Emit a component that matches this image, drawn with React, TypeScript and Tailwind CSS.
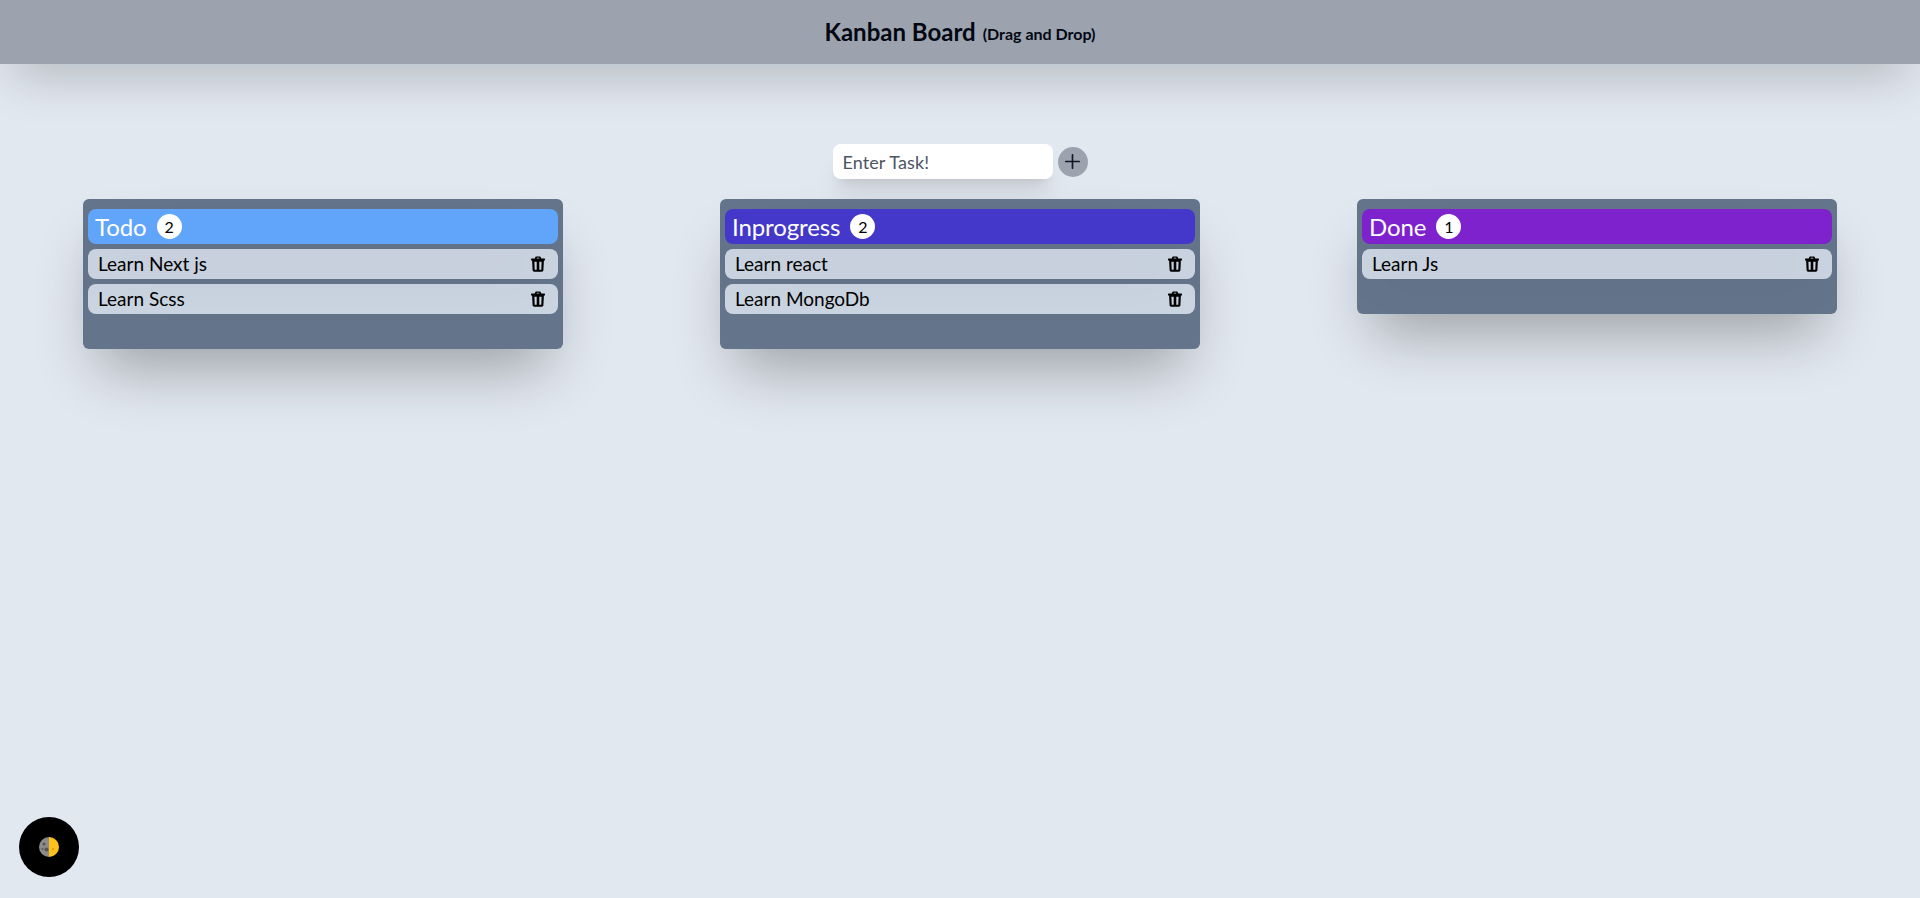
import { Plus } from "lucide-react";

const columns = [
  { title: "Todo", color: "bg-[#60a5fa]", items: ["Learn Next js", "Learn Scss"] },
  { title: "Inprogress", color: "bg-[#4338ca]", items: ["Learn react", "Learn MongoDb"] },
  { title: "Done", color: "bg-[#7e22ce]", items: ["Learn Js"] },
];

function Trash() {
  return (
    <svg viewBox="0 0 14 16" className="h-4 w-[14px] shrink-0" fill="currentColor">
      <path
        fillRule="evenodd"
        d="M4 1.700C4.200.8 4.800.4 5.600.4H8.400C9.200.4 9.800.8 10 1.700L10.200 2.400H13.400a.6.6 0 0 1 .6.6V4a.6.6 0 0 1-.6.6H12.900L12.400 14.300C12.350 15.100 11.700 15.700 10.900 15.700H3.100C2.300 15.700 1.650 15.100 1.600 14.300L1.100 4.600H.6A.6.6 0 0 1 0 4V3a.6.6 0 0 1 .6-.6H3.800ZM5.700 2.400H8.300L8.150 1.800H5.850ZM3.400 5.800 3.700 13.800H5.700V5.800ZM8.300 5.800V13.800H10.300L10.600 5.800Z"
      />
    </svg>
  );
}

function Column({ title, color, items }: { title: string; color: string; items: string[] }) {
  return (
    <div className="w-[480px] rounded-md bg-[#64748b] px-[5px] pt-[10px] pb-[35px] shadow-[0_35px_60px_-15px_rgba(0,0,0,0.3)]">
      <div className={`${color} relative z-10 flex h-[35px] items-center gap-[10px] rounded-lg pl-[7px] text-[24px] tracking-[-0.1px] text-white shadow-[0_35px_60px_-15px_rgba(0,0,0,0.3)]`}>
        <span>{title}</span>
        <span className="flex h-[25px] w-[25px] items-center justify-center rounded-full bg-white text-[16px] text-black">{items.length}</span>
      </div>
      <div className="mt-[5px] flex flex-col gap-[5px]">
        {items.map((t) => (
          <div key={t} className="flex h-[30px] items-center justify-between rounded-lg bg-[#cbd5e1] pr-[13px] pl-[10px] text-[19px] text-black">
            <span>{t}</span>
            <Trash />
          </div>
        ))}
      </div>
    </div>
  );
}

export default function App() {
  return (
    <div className="min-h-[898px] bg-[#e2e8f0] font-['Lato',sans-serif]">
      <header className="flex h-16 items-center justify-center bg-[#9ca3af] font-bold text-[#030712] shadow-[0_20px_50px_-12px_rgba(0,0,0,0.25)]">
        <span className="text-[24px]">Kanban Board</span>
        <span className="ml-[7px] pt-[4px] text-[16px]">(Drag and Drop)</span>
      </header>
      <div className="mt-20 flex h-[35px] items-center justify-center gap-[5px]">
        <input placeholder="Enter Task!" className="h-[35px] w-[220px] rounded-lg bg-white px-[10px] text-[18px] tracking-[0.1px] shadow-xl outline-none placeholder:text-[#4b5563]" />
        <button className="flex h-[30px] w-[30px] items-center justify-center rounded-full bg-[#9ca3af] text-[#111827]">
          <Plus size={23} strokeWidth={1.75} />
        </button>
      </div>
      <div className="mt-5 flex items-start justify-between px-[83px]">
        {columns.map((c) => (
          <Column key={c.title} {...c} />
        ))}
      </div>
      <button className="fixed bottom-[21px] left-[19px] flex h-[60px] w-[60px] items-center justify-center rounded-full bg-black">
        <svg viewBox="0 0 20 20" className="h-5 w-5">
          <path d="M10 0a10 10 0 0 0 0 20z" fill="#8b8b8b" />
          <path d="M10 0a10 10 0 0 1 0 20z" fill="#fcc21b" />
          <circle cx="5" cy="7" r="1.6" fill="#555" />
          <circle cx="7.500" cy="12.500" r="2" fill="#555" />
          <circle cx="3.500" cy="12" r="1" fill="#555" />
          <circle cx="14" cy="12" r="1" fill="#d9930f" />
        </svg>
      </button>
    </div>
  );
}
